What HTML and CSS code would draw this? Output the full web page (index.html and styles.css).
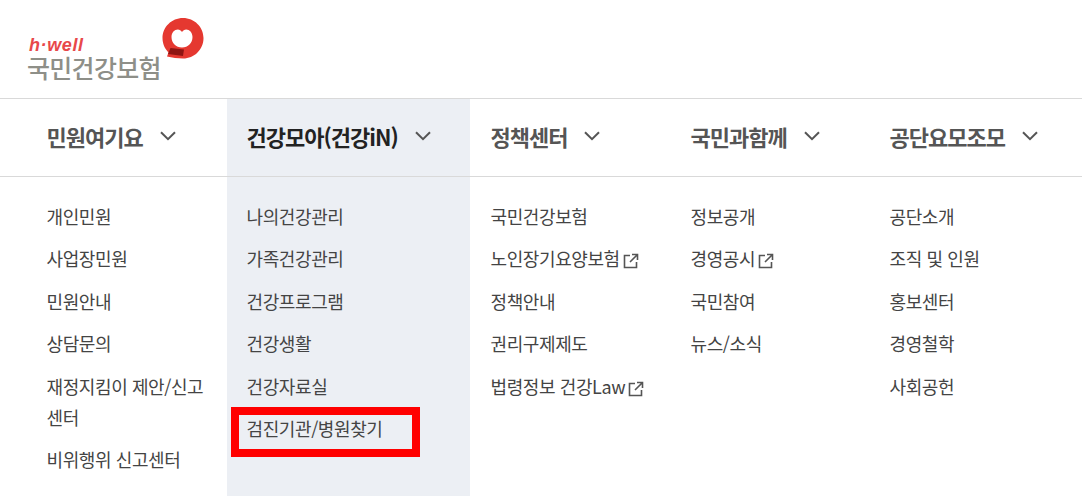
FILE: index.html
```html
<!DOCTYPE html>
<html lang="ko">
<head>
    <meta charset="UTF-8">
    <meta name="viewport" content="width=device-width, initial-scale=1.0">
    <title>국민건강보험</title>
    <link rel="stylesheet" href="styles.css">
</head>
<body>
    <header class="top">
        <a class="logo" href="#">
            <span class="logo-text">
                <span class="logo-well">h·well</span>
                <span class="logo-name">국민건강보험</span>
            </span>
            <svg class="logo-mark" viewBox="0 0 42 42" width="42" height="42" aria-hidden="true">
                <path d="M21 0C9.6 0 0.5 9 0.5 20C0.5 26 3 31 6.5 34.5L5 38.5C10 39.5 16 40.5 21 40.5C32.4 40.5 41.5 31.5 41.5 20C41.5 9 32.4 0 21 0Z" fill="#e53830"/>
                <path d="M20 29.5C14 29.5 9.5 25 9.5 19C9.5 14.5 12.5 11.5 15.8 11.5C17.6 11.5 19 12.4 20 14C21 12.4 22.4 11.5 24.2 11.5C27.5 11.5 30.5 14.5 30.5 19C30.5 25 26 29.5 20 29.5Z" fill="#fff"/>
                <path d="M8.5 30L22 31.5L21 38L6 36Z" fill="#8f1512"/>
            </svg>
        </a>
    </header>
    <nav class="menu">
        <section class="col col-first">
            <h2 class="col-title">민원여기요 <svg class="chev" viewBox="0 0 16 10" width="16" height="10"><path d="M1 1.2L8 8.2L15 1.2"/></svg></h2>
            <ul class="links">
                <li><a href="#">개인민원</a></li>
                <li><a href="#">사업장민원</a></li>
                <li><a href="#">민원안내</a></li>
                <li><a href="#">상담문의</a></li>
                <li><a href="#">재정지킴이 제안/신고센터</a></li>
                <li><a href="#">비위행위 신고센터</a></li>
            </ul>
        </section>
        <section class="col col-active">
            <h2 class="col-title">건강모아(건강iN) <svg class="chev" viewBox="0 0 16 10" width="16" height="10"><path d="M1 1.2L8 8.2L15 1.2"/></svg></h2>
            <ul class="links">
                <li><a href="#">나의건강관리</a></li>
                <li><a href="#">가족건강관리</a></li>
                <li><a href="#">건강프로그램</a></li>
                <li><a href="#">건강생활</a></li>
                <li><a href="#">건강자료실</a></li>
                <li class="marked"><a href="#">검진기관/병원찾기</a></li>
            </ul>
        </section>
        <section class="col col-mid">
            <h2 class="col-title">정책센터 <svg class="chev" viewBox="0 0 16 10" width="16" height="10"><path d="M1 1.2L8 8.2L15 1.2"/></svg></h2>
            <ul class="links">
                <li><a href="#">국민건강보험</a></li>
                <li><a href="#">노인장기요양보험<svg class="ext" viewBox="0 0 16 16" width="16" height="16"><path d="M7 2.5H1.5V14.5H13.5V9M9 1.5H14.5V7M14 2L7 9"/></svg></a></li>
                <li><a href="#">정책안내</a></li>
                <li><a href="#">권리구제제도</a></li>
                <li><a href="#">법령정보 건강Law<svg class="ext" viewBox="0 0 16 16" width="16" height="16"><path d="M7 2.5H1.5V14.5H13.5V9M9 1.5H14.5V7M14 2L7 9"/></svg></a></li>
            </ul>
        </section>
        <section class="col col-mid">
            <h2 class="col-title">국민과함께 <svg class="chev" viewBox="0 0 16 10" width="16" height="10"><path d="M1 1.2L8 8.2L15 1.2"/></svg></h2>
            <ul class="links">
                <li><a href="#">정보공개</a></li>
                <li><a href="#">경영공시<svg class="ext" viewBox="0 0 16 16" width="16" height="16"><path d="M7 2.5H1.5V14.5H13.5V9M9 1.5H14.5V7M14 2L7 9"/></svg></a></li>
                <li><a href="#">국민참여</a></li>
                <li><a href="#">뉴스/소식</a></li>
            </ul>
        </section>
        <section class="col col-last">
            <h2 class="col-title">공단요모조모 <svg class="chev" viewBox="0 0 16 10" width="16" height="10"><path d="M1 1.2L8 8.2L15 1.2"/></svg></h2>
            <ul class="links">
                <li><a href="#">공단소개</a></li>
                <li><a href="#">조직 및 인원</a></li>
                <li><a href="#">홍보센터</a></li>
                <li><a href="#">경영철학</a></li>
                <li><a href="#">사회공헌</a></li>
            </ul>
        </section>
    </nav>
</body>
</html>
```

FILE: styles.css
```css
html, body {
    height: 100%;
}
body {
    margin: 0;
    overflow: hidden;
    background-color: #fff;
    color: #444;
    font-family: "Noto Sans CJK KR", "Noto Sans", sans-serif;
}
a {
    color: inherit;
    text-decoration: none;
}
.top {
    height: 98px;
    box-sizing: border-box;
    padding: 18px 0 0 27px;
}
.logo {
    display: inline-flex;
    align-items: flex-start;
}
.logo-text {
    display: flex;
    flex-direction: column;
    padding-top: 19px;
}
.logo-well {
    height: 17px;
    padding-left: 2px;
    color: #e8484a;
    font-family: "Liberation Sans", sans-serif;
    font-size: 18px;
    font-style: italic;
    font-weight: bold;
    letter-spacing: 0.6px;
    line-height: 17px;
}
.logo-name {
    color: #8e8f88;
    font-size: 25px;
    font-weight: 500;
    letter-spacing: -0.7px;
    line-height: 26px;
}
.logo-mark {
    margin-left: 1px;
}
.menu {
    display: grid;
    grid-template-columns: 227px 243px 200px 200px 212px;
    height: 398px;
    border-top: 1px solid #d9d9d9;
}
.col {
    overflow: hidden;
    padding-left: 19.5px;
}
.col-first {
    padding-left: 46.5px;
}
.col-active {
    background-color: #eceff4;
}
.col-mid {
    padding-left: 20.5px;
}
.col-title {
    position: relative;
    display: flex;
    align-items: center;
    gap: 17px;
    box-sizing: border-box;
    height: 77px;
    margin: 0;
    padding-bottom: 3px;
    color: #555;
    font-size: 22px;
    font-weight: 700;
    letter-spacing: -1px;
}
.col-active .col-title {
    color: #222;
}
/* la linea divisoria atraviesa todas las columnas */
.col-title::after {
    content: "";
    position: absolute;
    left: -50px;
    right: -50px;
    bottom: -1px;
    height: 1px;
    background-color: #d9d9d9;
}
.chev {
    fill: none;
    stroke: #555;
    stroke-width: 2;
}
.links {
    margin: 0;
    padding: 19px 0 0;
    list-style: none;
    font-size: 18px;
    line-height: 42.4px;
    letter-spacing: -0.4px;
}
.col-first .links li {
    max-width: 165px;
    line-height: 31px;
    padding: 6px 0 5.4px;
}
.marked {
    position: relative;
}
.marked::after {
    content: "";
    position: absolute;
    left: -15.5px;
    top: 0;
    width: 173px;
    height: 34px;
    border: 8px solid #f00;
}
.ext {
    margin-left: 3px;
    vertical-align: -3px;
    fill: none;
    stroke: #555;
    stroke-width: 1.6;
}
```
